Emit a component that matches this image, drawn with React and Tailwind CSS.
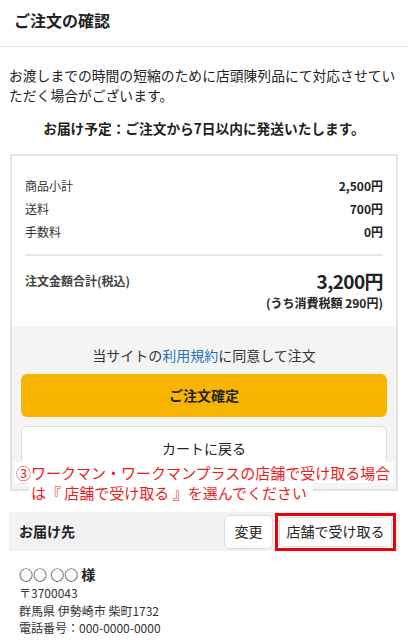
const rows = [
  { label: "商品小計", value: "2,500円" },
  { label: "送料", value: "700円" },
  { label: "手数料", value: "0円" },
];

const font = "font-['Noto_Sans_CJK_JP','Noto_Sans',sans-serif]";

export default function App() {
  return (
    <div className={`relative w-[408px] min-h-[640px] bg-white text-[#222] ${font}`}>
      <div className="h-[47px] px-[14px] pb-[6px] flex items-center border-b border-[#e3e3e3]">
        <h1 className="text-[16px] font-bold leading-none">ご注文の確認</h1>
      </div>

      <p className="px-[9px] pt-[18px] text-[13.8px] leading-[20px]">
        お渡しまでの時間の短縮のために店頭陳列品にて対応させていただく場合がございます。
      </p>
      <p className="mt-[13px] text-center text-[13.7px] font-bold leading-[20px]">
        お届け予定：ご注文から7日以内に発送いたします。
      </p>

      <div className="mt-[16px] mx-[10px] border-2 border-[#e2e2e2]">
        <div className="bg-white px-[13px] pt-[18px] pb-[15px]">
          {rows.map((r) => (
            <div key={r.label} className="flex justify-between leading-[23px] text-[12px]">
              <span className="text-[#333]">{r.label}</span>
              <span className="font-bold">{r.value}</span>
            </div>
          ))}
          <div className="mt-[11px] h-[2px] bg-[#e8e8e8]" />
          <div className="mt-[11px] flex justify-between items-center leading-[28px]">
            <span className="text-[12px] font-bold text-[#444]">注文金額合計(税込)</span>
            <span className="text-[19px] font-bold tracking-[-0.6px]">3,200円</span>
          </div>
          <div className="text-right text-[12px] font-bold leading-[16px]">
            (うち消費税額 290円)
          </div>
        </div>

        <div className="bg-[#f4f4f4] px-[9px] pt-[19px] pb-[19px]">
          <p className="text-center text-[14px] leading-[20px] text-[#333]">
            当サイトの<span className="text-[#1f74c0]">利用規約</span>に同意して注文
          </p>
          <button
            type="button"
            className="mt-[9px] w-full h-[43px] rounded-[6px] bg-[#f8b500] text-[14px] font-bold"
          >
            ご注文確定
          </button>
          <button
            type="button"
            className="mt-[9px] w-full h-[44px] rounded-[6px] bg-white border border-[#dcdcdc] text-[14px]"
          >
            カートに戻る
          </button>
        </div>
      </div>

      <div className="absolute left-[14px] top-[463px] text-[15px] leading-[20px] text-[#ee1c1c]">
        <div>
          <span className="bg-white pl-[2px] pr-[4px]">③ワークマン・ワークマンプラスの店舗で受け取る場合</span>
        </div>
        <div className="pl-[15px]">
          <span className="bg-white pl-[2px] pr-[6px]">は『 店舗で受け取る 』を選んでください</span>
        </div>
      </div>

      <div className="mt-[21px] mx-[9px] h-[39px] bg-[#f2f2f2] flex items-center justify-between pl-[10px] pr-[3px]">
        <span className="text-[14px] font-bold">お届け先</span>
        <div className="flex items-center gap-[2px]">
          <button
            type="button"
            className="h-[34px] w-[49px] rounded-[6px] bg-white border border-[#dcdcdc] text-[14px]"
          >
            変更
          </button>
          <div className="h-[38px] w-[121px] border-[3px] border-[#e8000b] bg-white p-[1px]">
            <button
              type="button"
              className="h-full w-full rounded-[4px] bg-white border border-[#dcdcdc] text-[14px]"
            >
              店舗で受け取る
            </button>
          </div>
        </div>
      </div>

      <div className="px-[19px] pt-[13px]">
        <p className="text-[14px] font-bold leading-[20px]">○○ ○○ 様</p>
        <div className="text-[12px] leading-[17.5px] text-[#333]">
          <p>〒3700043</p>
          <p>群馬県 伊勢崎市 柴町1732</p>
          <p>電話番号：000-0000-0000</p>
        </div>
      </div>
    </div>
  );
}
